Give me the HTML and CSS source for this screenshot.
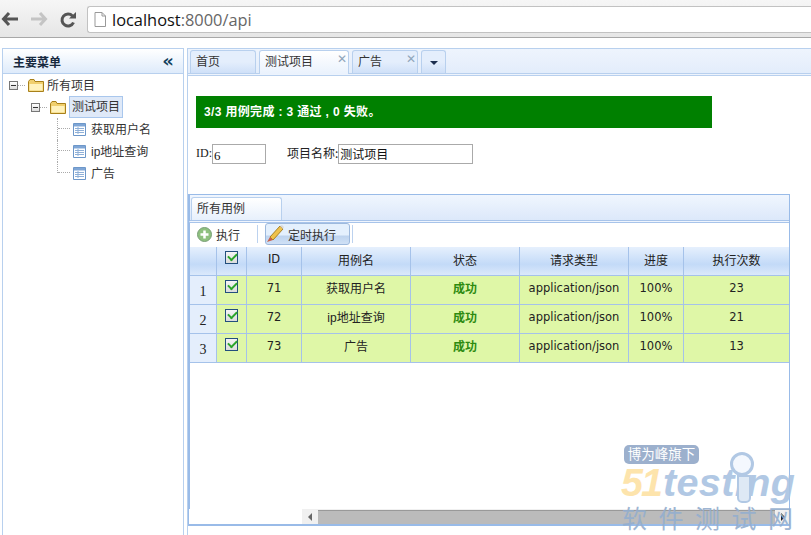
FILE: index.html
```html
<!DOCTYPE html>
<html lang="zh">
<head>
<meta charset="utf-8">
<title>api</title>
<link rel="stylesheet" href="styles.css">
</head>
<body>
<header class="chrome">
  <svg class="nav-icon" width="18" height="16" viewBox="0 0 18 16"><path d="M8 2 2.500 8 8 14M3 8h14" fill="none" stroke="#555" stroke-width="3"/></svg>
  <svg class="nav-icon" width="18" height="16" viewBox="0 0 18 16"><path d="M10 2l5.500 6L10 14M15 8H1" fill="none" stroke="#c4c4c4" stroke-width="3"/></svg>
  <svg class="nav-icon" width="18" height="18" viewBox="0 0 18 18"><path d="M14.500 11.500A6 6 0 1 1 13.500 5" fill="none" stroke="#555" stroke-width="3"/><path d="M10 7.500h7V1z" fill="#555"/></svg>
  <div class="address">
    <svg width="12" height="15" viewBox="0 0 12 15"><path d="M1 .5h7l3.500 3.500v10.500H1zM8 .5V4h3.500" fill="#fff" stroke="#999"/></svg>
    <span class="host">localhost</span><span class="path">:8000/api</span>
  </div>
</header>

<div class="workspace">
  <aside class="sidebar">
    <div class="side-head"><span>主要菜单</span><span class="collapse">«</span></div>
    <ul class="tree">
      <li class="node lvl0">
        <span class="toggle"></span><span class="dots"></span>
        <svg class="folder" width="16" height="13" viewBox="0 0 16 13"><path d="M.5 2.500 2 .5h4l1 2h8.500v10H.500z" fill="#f0cf6e" stroke="#a8801a"/><path d="M1.500 5h13v6.500h-13z" fill="#fff2bd"/></svg>
        <span class="label">所有项目</span>
      </li>
      <li class="node lvl1">
        <span class="toggle"></span><span class="dots"></span>
        <svg class="folder" width="16" height="13" viewBox="0 0 16 13"><path d="M.5 2.500 2 .5h4l1 2h8.500v10H.500z" fill="#f0cf6e" stroke="#a8801a"/><path d="M1.500 5h13v6.500h-13z" fill="#fff2bd"/></svg>
        <span class="selected">测试项目</span>
      </li>
      <li class="node lvl2">
        <span class="branch first"></span>
        <svg class="leaf" width="13" height="13" viewBox="0 0 13 13"><path d="M.5.500h12v12H.5z" fill="#fff" stroke="#6d97c9"/><path d="M1 1h11v2.500H1z" fill="#7fa6d6"/><path d="M2 5.500h9M2 7.500h9M2 9.500h9M5 4v7" stroke="#8fb0d8" fill="none"/></svg>
        <span class="label">获取用户名</span>
      </li>
      <li class="node lvl2">
        <span class="branch"></span>
        <svg class="leaf" width="13" height="13" viewBox="0 0 13 13"><path d="M.5.500h12v12H.5z" fill="#fff" stroke="#6d97c9"/><path d="M1 1h11v2.500H1z" fill="#7fa6d6"/><path d="M2 5.500h9M2 7.500h9M2 9.500h9M5 4v7" stroke="#8fb0d8" fill="none"/></svg>
        <span class="label">ip地址查询</span>
      </li>
      <li class="node lvl2">
        <span class="branch last"></span>
        <svg class="leaf" width="13" height="13" viewBox="0 0 13 13"><path d="M.5.500h12v12H.5z" fill="#fff" stroke="#6d97c9"/><path d="M1 1h11v2.500H1z" fill="#7fa6d6"/><path d="M2 5.500h9M2 7.500h9M2 9.500h9M5 4v7" stroke="#8fb0d8" fill="none"/></svg>
        <span class="label">广告</span>
      </li>
    </ul>
  </aside>

  <main class="main">
    <nav class="tabs">
      <div class="tab tab-home">首页</div>
      <div class="tab tab-active">测试项目<span class="close">✕</span></div>
      <div class="tab tab-ad">广告<span class="close">✕</span></div>
      <div class="tab tab-more"><span class="caret"></span></div>
    </nav>
    <div class="content">
      <div class="alert">3/3 用例完成 : 3 通过 , 0 失败。</div>
      <div class="fields">
        <span class="field-label">ID:</span><span class="input input-id">6</span>
        <span class="field-label name-label">项目名称:</span><span class="input input-name">测试项目</span>
      </div>
      <section class="panel">
        <div class="panel-tabs"><div class="panel-tab">所有用例</div></div>
        <div class="toolbar">
          <span class="tool">
            <svg width="15" height="15" viewBox="0 0 15 15"><circle cx="7.500" cy="7.500" r="7" fill="#8ec07e" stroke="#7a9f78"/><path d="M7.500 3.500v8M3.500 7.500h8" stroke="#fff" stroke-width="2.500"/></svg>
            执行
          </span>
          <span class="sep"></span>
          <span class="tool tool-pressed">
            <svg width="17" height="18" viewBox="0 0 17 18"><path d="M3 12 13 1l3 3L6 15z" fill="#efc24b" stroke="#a98326"/><path d="M0 17l3-5 3 3z" fill="#c9614a"/><path d="M13 1l3 3 1-2-2-2z" fill="#d9d9d9"/></svg>
            定时执行
          </span>
          <span class="sep"></span>
        </div>
        <table class="grid">
          <colgroup>
            <col class="c-num"><col class="c-check"><col class="c-id"><col class="c-name"><col class="c-state"><col class="c-type"><col class="c-prog"><col class="c-count">
          </colgroup>
          <thead>
            <tr><th></th><th class="chk"><span class="check"></span></th><th class="en">ID</th><th>用例名</th><th>状态</th><th>请求类型</th><th>进度</th><th>执行次数</th></tr>
          </thead>
          <tbody>
            <tr><td class="num">1</td><td class="chk"><span class="check"></span></td><td class="en">71</td><td>获取用户名</td><td class="ok">成功</td><td class="en">application/json</td><td class="en">100%</td><td class="en">23</td></tr>
            <tr><td class="num">2</td><td class="chk"><span class="check"></span></td><td class="en">72</td><td>ip地址查询</td><td class="ok">成功</td><td class="en">application/json</td><td class="en">100%</td><td class="en">21</td></tr>
            <tr><td class="num">3</td><td class="chk"><span class="check"></span></td><td class="en">73</td><td>广告</td><td class="ok">成功</td><td class="en">application/json</td><td class="en">100%</td><td class="en">13</td></tr>
          </tbody>
        </table>
        <div class="spacer"></div>
        <div class="scrollbar"><span class="arrow-l"></span><span class="thumb"></span><span class="arrow-r"></span></div>
      </section>
    </div>
  </main>
</div>

<div class="watermark">
  <span class="wm-badge">博为峰旗下</span>
  <span class="wm-logo"><span class="wm-51">51</span>testing</span>
  <span class="wm-lens"></span>
  <span class="wm-cn">软件测试网</span>
</div>
</body>
</html>
```
FILE: styles.css
```css
* { box-sizing: border-box; }
html, body { margin: 0; height: 535px; overflow: hidden; }
body {
  position: relative;
  width: 811px;
  background: #fff;
  color: #222;
  font: 12px "Liberation Sans", "Noto Sans CJK SC", sans-serif;
  display: flex;
  flex-direction: column;
}
.chrome {
  height: 38px;
  flex: none;
  padding: 6px 0 0 1px;
  display: flex;
  align-items: flex-start;
  background: linear-gradient(#f6f6f6, #e6e6e6);
  border-bottom: 1px solid #a8a8a8;
}
.nav-icon { margin: 5px 11px 0 0; }
.nav-icon:nth-child(3) { margin: 5px 0 0 0; }
.address {
  margin-left: 10px;
  flex: 1;
  height: 27px;
  display: flex;
  align-items: center;
  padding-left: 6px;
  background: #fff;
  border: 1px solid #c2c2c2;
  border-right: 0;
  border-radius: 3px 0 0 3px;
  font: 16.400px "Open Sans", "Liberation Sans", sans-serif;
}
.address svg { margin-right: 6px; }
.host { color: #111; }
.path { color: #666; }

.workspace {
  flex: 1;
  min-height: 0;
  margin-top: 10px;
  padding-left: 2px;
  display: flex;
  gap: 3px;
}
.sidebar {
  width: 182px;
  flex: none;
  border: 1px solid #b8d0ee;
  border-bottom: 0;
}
.side-head {
  height: 25px;
  padding: 0 9px 0 10px;
  display: flex;
  justify-content: space-between;
  align-items: center;
  background: linear-gradient(#fff, #deebfb);
  border-bottom: 1px solid #b8d0ee;
  font-weight: bold;
  color: #17293f;
}
.collapse { color: #12405c; font: bold 18px/1 "DejaVu Sans", sans-serif; margin-top: -1px; }
.tree { list-style: none; margin: 0; padding: 0; }
.node { height: 22px; display: flex; align-items: center; color: #333; }
.lvl0 { padding-left: 6px; }
.lvl1 { padding-left: 28px; }
.lvl2 { padding-left: 54px; }
.toggle {
  position: relative;
  width: 9px; height: 9px;
  background: linear-gradient(#fff, #ddd);
  border: 1px solid #777;
}
.toggle::after { content: ""; position: absolute; left: 1px; right: 1px; top: 3px; height: 1px; background: #333; }
.dots { width: 7px; border-top: 1px dotted #aaa; margin-right: 3px; }
.folder { margin-right: 2px; }
.label { padding: 0 1px; margin-top: -2px; }
.selected { height: 22px; line-height: 20px; padding: 0 2px; margin-left: 1px; background: #dfe9f8; border: 1px solid #a9c7ed; }
.branch {
  width: 14px;
  height: 22px;
  margin-right: 2px;
  position: relative;
  border-left: 1px dotted #aaa;
}
.branch.last { height: 11px; align-self: flex-start; }
.branch::after { content: ""; position: absolute; left: 0; right: 1px; top: 10px; border-top: 1px dotted #aaa; }
.leaf { margin-right: 4px; }

.main {
  flex: 1;
  min-width: 0;
  border-left: 1px solid #b8d0ee;
  border-top: 1px solid #b8d0ee;
  display: flex;
  flex-direction: column;
}
.tabs {
  height: 27px;
  flex: none;
  padding: 1px 0 0 2px;
  display: flex;
  gap: 3px;
  border-bottom: 3px double #b8d0ee;
  background: linear-gradient(#eef4fd, #e3edfb);
}
.tab {
  position: relative;
  height: 23px;
  padding: 3px 0 0 5px;
  line-height: 16px;
  border: 1px solid #b8d0ee;
  border-bottom: 0;
  border-radius: 3px 3px 0 0;
  background: linear-gradient(#e4eefc 50%, #cfe0f8);
  color: #333;
}
.tab-home { width: 66px; }
.tab-active { width: 90px; background: linear-gradient(#fff, #eaf2fd); height: 24px; }
.tab-ad { width: 66px; }
.tab-more { width: 25px; }
.close { position: absolute; right: 1px; top: 2px; color: #8fa6ba; font: bold 12px/12px "DejaVu Sans", sans-serif; }
.caret { position: absolute; left: 8px; top: 10px; border: 4px solid transparent; border-top: 4px solid #1c2f4f; border-bottom: 0; width: 0; }

.content { flex: 1; min-height: 0; padding: 20px 0 9px; display: flex; flex-direction: column; }
.alert {
  width: 516px;
  height: 32px;
  margin-left: 8px;
  padding-left: 8px;
  line-height: 33px;
  letter-spacing: .35px;
  background: #008000;
  color: #fff;
  font-weight: bold;
  flex: none;
}
.fields { margin: 16px 0 0 8px; height: 20px; display: flex; align-items: center; font-family: "Liberation Serif", "Noto Sans CJK SC", serif; color: #222; flex: none; }
.field-label { margin-top: -1px; }
.name-label { margin-left: 21px; font-family: "Noto Sans CJK SC", sans-serif; margin-top: -3px; }
.input { height: 20px; border: 1px solid #aaa; padding: 2px 0 0 1px; line-height: 17px; background: #fff; color: #111; }
.input-id { width: 54px; font-size: 13px; }
.input-name { width: 135px; }

.panel {
  flex: 1;
  min-height: 0;
  margin-top: 30px;
  width: 602px;
  border: 1px solid #99bbe8;
  border-bottom-width: 2px;
  display: flex;
  flex-direction: column;
}
.panel-tabs {
  height: 28px;
  flex: none;
  padding: 2px 0 0 1px;
  background: linear-gradient(#f0f6fe, #dce8fa);
  border-bottom: 3px double #a8c4ea;
  border-left: 1px solid #99bbe8;
}
.panel-tab {
  width: 91px;
  height: 23px;
  padding: 3px 0 0 5px;
  line-height: 16px;
  border: 1px solid #b8d0ee;
  border-bottom: 0;
  border-radius: 3px 3px 0 0;
  background: linear-gradient(#fff, #e7f0fc);
  color: #333;
}
.toolbar {
  height: 24px;
  flex: none;
  display: flex;
  align-items: center;
  padding: 0 0 2px 7px;
  background: #fff;
  border-left: 1px solid #99bbe8;
  color: #333;
}
.tool { display: flex; align-items: center; gap: 4px; }
.sep { width: 1px; height: 18px; background: #bcd2ef; margin: 0 7px 0 17px; }
.tool-pressed + .sep { margin: 0 0 0 2px; }
.tool-pressed {
  width: 85px;
  height: 22px;
  padding-left: 1px;
  border: 1px solid #9db9dd;
  border-radius: 3px;
  background: linear-gradient(#e4f0fd 55%, #bdd3ee 60%, #d0e1f6);
}
.grid { width: 600px; border-collapse: separate; border-spacing: 0; table-layout: fixed; border-left: 1px solid #99bbe8; flex: none; }
.c-num { width: 27px; } .c-check { width: 30px; } .c-id { width: 55px; } .c-name { width: 109px; }
.c-state { width: 109px; } .c-type { width: 109px; } .c-prog { width: 55px; } .c-count { width: 105px; }
.grid th {
  height: 29px;
  padding: 0 0 4px;
  font-weight: normal;
  color: #222;
  border-right: 1px solid #a5c2ea;
  border-bottom: 1px solid #a5c2ea;
  background: linear-gradient(#e6f0fd, #c3daf8 62%, #dbe9fb);
  vertical-align: middle;
}
.grid th.chk { padding-bottom: 9px; }
.grid th:last-child, .grid td:last-child { border-right: 0; }
.grid td {
  height: 29px;
  padding: 0 0 5px;
  text-align: center;
  background: #dff7a7;
  color: #222;
  border-right: 1px solid #a5c2ea;
  border-bottom: 1px solid #a5c2ea;
}
.grid th.en, .grid td.en { font: 11.500px "DejaVu Sans", sans-serif; }
.grid td.num { background: #e4eefc; padding: 3px 0 0; font-family: "Liberation Serif", serif; font-size: 14px; }
.grid td.chk { padding: 0 0 8px; }
.grid td.ok { color: #2e8b10; font-weight: bold; padding-bottom: 6px; }
.check {
  display: inline-block;
  position: relative;
  width: 13px;
  height: 13px;
  border: 1px solid #234f7d;
  background: linear-gradient(#f4f4f4, #dcdcdc);
  vertical-align: middle;
}
.check::after {
  content: "";
  position: absolute;
  left: 2px; top: 1px;
  width: 7px; height: 4px;
  border-left: 2px solid #2aa52a;
  border-bottom: 2px solid #2aa52a;
  transform: rotate(-45deg);
}
.spacer { flex: 1; border-left: 1px solid #99bbe8; }
.scrollbar {
  height: 15px;
  width: 487px;
  margin-left: 113px;
  flex: none;
  display: flex;
  align-items: center;
  background: #f0f0f0;
}
.arrow-l { width: 0; margin: 0 6px; border: 4px solid transparent; border-right: 4px solid #666; border-left: 0; }
.thumb { flex: 1; height: 14px; margin-top: 1px; background: #bbb; border-top: 1px solid #999; }
.arrow-r { width: 0; margin: 0 4px 0 6px; border: 4px solid transparent; border-left: 4px solid #222; border-right: 0; }

.watermark { position: absolute; left: 620px; top: 444px; width: 191px; height: 91px; opacity: .9; }
.wm-badge {
  position: absolute; left: 4px; top: 1px; width: 75px; height: 19px;
  background: #92a8c8; border-radius: 5px; color: #fff; font-size: 13.500px; line-height: 19px; text-align: center;
}
.wm-logo {
  position: absolute; left: 1px; top: 14px;
  font: italic bold 39.500px/48px "Liberation Sans", sans-serif;
  letter-spacing: 0.4px; color: #a9c3e2;
}
.wm-51 { color: #fde2a4; letter-spacing: -2px; margin-right: 2px; }
.wm-lens {
  position: absolute; left: 110px; top: 8px; width: 24px; height: 24px;
  border: 3px solid #a9c3e2; border-radius: 50%; background: #f3f8fe;
}
.wm-lens::after {
  content: ""; position: absolute; left: 4px; top: 20px; width: 10px; height: 24px;
  background: #dbe7f5; border: 2px solid #a9c3e2; border-radius: 0 0 5px 5px;
}
.wm-cn { position: absolute; left: 2px; top: 60px; font-size: 25px; line-height: 30px; letter-spacing: 11.500px; color: #94aece; white-space: nowrap; }
```
